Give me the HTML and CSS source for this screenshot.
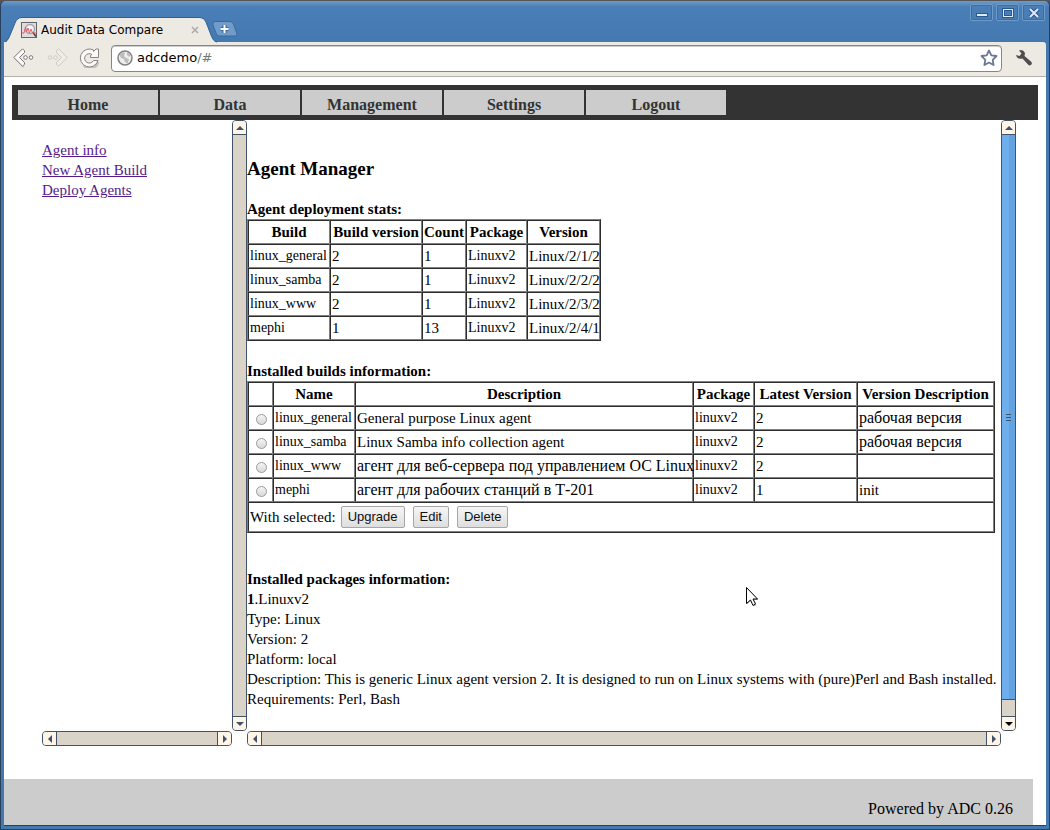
FILE: index.html
```html
<!DOCTYPE html>
<html lang="en">
<head>
<meta charset="utf-8">
<title>Audit Data Compare</title>
<link rel="stylesheet" href="styles.css">
</head>
<body>
<div class="window">
  <header class="titlebar">
    <div class="tab">
      <svg class="tab-shape" width="212" height="26" viewBox="0 0 212 26" aria-hidden="true">
        <path d="M0 26C3 24 4 21 5.500 17L10 6Q12 .5 17 .5H194Q199 .5 201 5L206 18C208 23 209 24 212 26Z" fill="#edeae4"/>
        <path d="M0 25C3 23 4 21 5.500 17L10 6Q12 .5 17 .5H194Q199 .5 201 5L206 18C208 23 209 24 212 25" fill="none" stroke="#2f5f94"/>
      </svg>
      <svg class="favicon" width="16" height="16" viewBox="0 0 16 16" aria-hidden="true">
        <rect x=".5" y=".5" width="15" height="15" fill="#dcdde2" stroke="#666"/>
        <circle cx="9" cy="7" r="4.500" fill="#f4f4f6" stroke="#a4a6ae" stroke-width="1.500"/>
        <path d="M12 10.500L15 14.500" stroke="#444" stroke-width="1.500"/>
        <path d="M1 11H3L4.500 5L5.500 10L7 6L8.500 11L10 7L11.500 11H15" fill="none" stroke="#e86060"/>
      </svg>
      <span class="tab-title">Audit Data Compare</span>
      <button class="tab-close" aria-label="Close tab"><svg width="8" height="8" viewBox="0 0 8 8"><path d="M1 1L7 7M7 1L1 7" stroke="#aaa" stroke-width="1.500"/></svg></button>
    </div>
    <button class="new-tab" aria-label="New tab"><svg width="26" height="16" viewBox="0 0 26 16"><path d="M3 .5H18Q20.500 .5 21.500 3L25 13Q25.500 15 23 15H7Q5 15 4 12L1 4Q0 .5 3 .5Z" fill="#719bc8" stroke="#386ba3"/><path d="M12.500 4V12M8.500 8H16.500" stroke="#39699f" stroke-width="4"/><path d="M12.500 4V12M8.500 8H16.500" stroke="#fff" stroke-width="2"/></svg></button>
    <div class="window-buttons">
      <button aria-label="Minimize"><svg width="22" height="16" viewBox="0 0 22 16"><path d="M5 10H17" stroke="#2b588d" stroke-width="4"/><path d="M6 10H16" stroke="#dfeaf5" stroke-width="2"/></svg></button>
      <button aria-label="Maximize"><svg width="22" height="16" viewBox="0 0 22 16"><rect x="6.500" y="4.500" width="9" height="7" fill="none" stroke="#2b588d" stroke-width="3"/><path d="M6 4.500H16M6.500 4V12M15.500 4V12M6 11.500H16" stroke="#dfeaf5"/></svg></button>
      <button aria-label="Close"><svg width="22" height="16" viewBox="0 0 22 16"><path d="M7 4L15 12M15 4L7 12" stroke="#2b588d" stroke-width="4"/><path d="M7 4L15 12M15 4L7 12" stroke="#dfeaf5" stroke-width="2"/></svg></button>
    </div>
  </header>

  <div class="toolbar">
    <button class="tool" aria-label="Back"><svg width="22" height="20" viewBox="0 0 22 20"><path d="M3 11L11 19" stroke="#cac6bf" stroke-width="2"/><path d="M9.500 .8L.8 9.500L9.500 18.200L11.500 16.200V14.500L6.500 9.500L11.500 4.500V2.800Z" fill="#fbfaf8" stroke="#777" stroke-linejoin="round"/><circle cx="12.500" cy="9.500" r="1.800" fill="#fff" stroke="#777"/><circle cx="18" cy="9.500" r="1.800" fill="#fff" stroke="#777"/></svg></button>
    <button class="tool" aria-label="Forward"><svg width="22" height="20" viewBox="0 0 22 20"><path d="M12.500 .8L21.200 9.500L12.500 18.200L10.500 16.200V14.500L15.500 9.500L10.500 4.500V2.800Z" fill="#f0ede8" stroke="#ccc8c1" stroke-linejoin="round"/><circle cx="9.500" cy="9.500" r="1.800" fill="none" stroke="#d0ccc5"/><circle cx="4" cy="9.500" r="1.800" fill="none" stroke="#d0ccc5"/></svg></button>
    <button class="tool" aria-label="Reload"><svg width="22" height="20" viewBox="0 0 22 20"><path d="M19 14A8 8 0 0 1 5 17" fill="none" stroke="#c5c1ba" stroke-width="3"/><path d="M14.500 3.500L17 1H19.500V9.500H11.500V7.500L13 6.500A4.700 4.700 0 1 0 14.500 12.500H19A9 9 0 1 1 14.500 2Z" fill="#fbfaf8" stroke="#858585" stroke-linejoin="round"/></svg></button>
    <div class="omnibox">
      <svg width="16" height="16" viewBox="0 0 16 16" aria-hidden="true"><circle cx="8" cy="8" r="7" fill="#eee" stroke="#808080" stroke-width="1.500"/><path d="M2.500 5L6 2L8 3L7 6L9 8L12 9L10.500 13.500L8 12L7 9L4 8ZM10 2L13.500 5L12 7L10 5Z" fill="#bcbcbc"/></svg>
      <div class="url" role="textbox" aria-label="Address">adcdemo<span>/#</span></div>
      <button class="star" aria-label="Bookmark"><svg width="18" height="18" viewBox="0 0 18 18"><path d="M9 1.500L11.300 6.300L16.500 7L12.700 10.800L13.600 16L9 13.500L4.400 16L5.300 10.800L1.500 7L6.700 6.300Z" fill="#fff" stroke="#6b7893" stroke-width="1.800" stroke-linejoin="round"/></svg></button>
    </div>
    <button class="tool wrench" aria-label="Settings menu"><svg width="18" height="18" viewBox="0 0 18 18"><path d="M4 1.500Q8 0 10 4L9.500 7L16.500 13Q17.500 15 16 16Q14.500 17 13 15.500L7.500 9.500Q2.500 11 1 6L4.500 7L6.500 4.500Z" fill="#4e4e4e"/></svg></button>
  </div>

  <div class="page">
    <nav class="menu">
      <a href="#">Home</a><a href="#">Data</a><a href="#">Management</a><a href="#">Settings</a><a href="#">Logout</a>
    </nav>
    <div class="frames">
      <aside class="frame side">
        <div class="links">
          <a href="#">Agent info</a>
          <a href="#">New Agent Build</a>
          <a href="#">Deploy Agents</a>
        </div>
        <div class="bar vertical">
          <span class="arrow"><i class="up"></i></span><span class="track"></span><span class="arrow"><i class="down"></i></span>
        </div>
        <div class="bar horizontal">
          <span class="arrow"><i class="left"></i></span><span class="track"></span><span class="arrow"><i class="right"></i></span>
        </div>
      </aside>
      <main class="frame content">
        <div class="document">
          <h1>Agent Manager</h1>
          <h2>Agent deployment stats:</h2>
          <table class="stats">
            <colgroup><col class="w82"><col class="w92"><col class="w44"><col class="w61"><col class="w73"></colgroup>
            <tr><th>Build</th><th>Build version</th><th>Count</th><th>Package</th><th>Version</th></tr>
            <tr><td class="id">linux_general</td><td>2</td><td>1</td><td class="id">Linuxv2</td><td>Linux/2/1/2</td></tr>
            <tr><td class="id">linux_samba</td><td>2</td><td>1</td><td class="id">Linuxv2</td><td>Linux/2/2/2</td></tr>
            <tr><td class="id">linux_www</td><td>2</td><td>1</td><td class="id">Linuxv2</td><td>Linux/2/3/2</td></tr>
            <tr><td class="id">mephi</td><td>1</td><td>13</td><td class="id">Linuxv2</td><td>Linux/2/4/1</td></tr>
          </table>
          <h2 class="spaced">Installed builds information:</h2>
          <table class="builds">
            <colgroup><col class="w25"><col class="w82"><col class="w338"><col class="w61"><col class="w103"><col class="w137"></colgroup>
            <tr><th></th><th>Name</th><th>Description</th><th>Package</th><th>Latest Version</th><th>Version Description</th></tr>
            <tr><td class="pick"><input type="radio" name="build" id="b1"></td><td class="id"><label for="b1">linux_general</label></td><td>General purpose Linux agent</td><td class="id">linuxv2</td><td>2</td><td class="ru" lang="ru">рабочая версия</td></tr>
            <tr><td class="pick"><input type="radio" name="build" id="b2"></td><td class="id"><label for="b2">linux_samba</label></td><td>Linux Samba info collection agent</td><td class="id">linuxv2</td><td>2</td><td class="ru" lang="ru">рабочая версия</td></tr>
            <tr><td class="pick"><input type="radio" name="build" id="b3"></td><td class="id"><label for="b3">linux_www</label></td><td class="ru" lang="ru">агент для веб-сервера под управлением ОС Linux</td><td class="id">linuxv2</td><td>2</td><td></td></tr>
            <tr><td class="pick"><input type="radio" name="build" id="b4"></td><td class="id"><label for="b4">mephi</label></td><td class="ru" lang="ru">агент для рабочих станций в Т-201</td><td class="id">linuxv2</td><td>1</td><td>init</td></tr>
            <tr><td colspan="6"><div class="actions"><span>With selected:</span><button>Upgrade</button><button>Edit</button><button>Delete</button></div></td></tr>
          </table>
          <section class="packages">
            <h2>Installed packages information:</h2>
            <div><b>1</b>.Linuxv2</div>
            <div>Type: Linux</div>
            <div>Version: 2</div>
            <div>Platform: local</div>
            <div>Description: This is generic Linux agent version 2. It is designed to run on Linux systems with (pure)Perl and Bash installed.</div>
            <div>Requirements: Perl, Bash</div>
          </section>
        </div>
        <div class="bar vertical">
          <span class="arrow"><i class="up"></i></span><span class="thumb"><i></i></span><span class="track short"></span><span class="arrow"><i class="down active"></i></span>
        </div>
        <div class="bar horizontal">
          <span class="arrow"><i class="left"></i></span><span class="track"></span><span class="arrow"><i class="right"></i></span>
        </div>
      </main>
    </div>
    <footer class="footer">Powered by ADC 0.26</footer>
  </div>
  <svg class="pointer" width="14" height="21" viewBox="0 0 14 21" aria-hidden="true"><path d="M2 2V18.500L6 15L9 20.500L11.500 19L9 14H13.500Z" fill="#bbb"/><path d="M1.500 1.500V17.500L5.500 14L8 19.500L10.500 18L8 13H12.500Z" fill="#fff" stroke="#000"/></svg>
</div>
</body>
</html>
```

FILE: styles.css
```css
* { box-sizing: border-box; }
html { background: #555; }
body {
  margin: 0;
  font: 15px/20px "Liberation Serif", serif;
  color: #000;
}
button { border: 0; padding: 0; background: none; }
svg { display: block; }

.window {
  position: relative;
  display: flex;
  flex-direction: column;
  min-height: 100vh;
  padding: 0 3px;
  background: #4479b0;
  border: 1px solid #29405c;
  border-top-color: #555;
  border-radius: 6px 6px 0 0;
}

/* Title bar and tabs */
.titlebar {
  display: flex;
  align-items: flex-end;
  height: 41px;
  margin: 0 -3px;
  padding-left: 4px;
  background: linear-gradient(#6d9bcb 0, #4a7eb7 6px, #4479b0);
  border-radius: 5px 5px 0 0;
}
.tab {
  position: relative;
  display: flex;
  align-items: center;
  width: 212px;
  height: 25px;
  padding: 0 18px 0 16px;
  font: 12px/16px "DejaVu Sans", sans-serif;
}
.tab-shape { position: absolute; left: 0; top: 0; }
.favicon, .tab-title, .tab-close { position: relative; }
.tab-title { flex: 1; margin-left: 4px; white-space: nowrap; }
.new-tab { margin: 0 0 5px -5px; }
.window-buttons {
  display: flex;
  gap: 3px;
  align-self: flex-start;
  margin: 3px 4px 0 auto;
}
.window-buttons button {
  border: 1px solid #6f9bc8;
  border-radius: 2px;
  width: 23px;
  height: 17px;
  box-shadow: inset 0 0 0 1px #3b6da5;
  overflow: hidden;
}

/* Toolbar */
.toolbar {
  display: flex;
  align-items: center;
  height: 35px;
  padding: 0 4px 2px 9px;
  background: #edeae4;
  border-bottom: 1px solid #b5b0a8;
  border-radius: 0 3px 0 0;
}
.tool { margin-right: 11px; }
.omnibox {
  display: flex;
  flex: 1;
  align-items: center;
  height: 27px;
  margin-left: -1px;
  padding: 0 3px 0 5px;
  background: #fff;
  border: 1px solid #8c8579;
  border-radius: 4px;
  box-shadow: inset 0 1px 0 #ccc;
}
.url {
  flex: 1;
  margin-left: 4px;
  font: 13px/20px "DejaVu Sans", sans-serif;
}
.url span { color: #777; }
.wrench { margin: 0 9px 0 13px; }

/* Page */
.page {
  display: flex;
  flex: 1;
  flex-direction: column;
  padding-top: 8px;
  background: #fff;
}
.window::after {
  height: 3px;
  border-top: 1px solid #29405c;
  content: "";
}
.menu {
  display: flex;
  gap: 2px;
  margin: 0 8px;
  padding: 5px 6px;
  background: #333;
}
.menu a {
  width: 140px;
  padding-top: 5px;
  background: #ccc;
  color: #333;
  font-size: 16px;
  font-weight: bold;
  text-align: center;
  text-decoration: none;
}
.frames {
  display: flex;
  margin: 0 30px 33px 38px;
}
.frame {
  display: grid;
  grid-template-columns: 1fr 15px;
  grid-template-rows: 1fr 15px;
}
.side { width: 205px; }
.content { flex: 1; min-width: 0; }
.links {
  display: flex;
  flex-direction: column;
  align-items: flex-start;
  padding-top: 20px;
}
.links a { color: #551a8b; }
.document { min-width: 0; padding: 39px 0 22px; }

/* Scroll bars */
.bar {
  display: flex;
  background: #dad3c7;
  border: 1px solid #405369;
  border-radius: 4px;
  overflow: hidden;
}
.vertical { flex-direction: column; }
.track { flex: 1; }
.track.short { flex: 0 0 16px; }
.arrow {
  display: flex;
  flex: 0 0 14px;
  align-items: center;
  justify-content: center;
  background: #fff5e6;
}
.vertical .arrow:first-child { border-bottom: 1px solid #405369; }
.vertical .arrow:last-child { border-top: 1px solid #405369; }
.horizontal .arrow:first-child { border-right: 1px solid #405369; }
.horizontal .arrow:last-child { border-left: 1px solid #405369; }
.arrow i { border: 4px solid transparent; }
.arrow .up { border-top: 0; border-bottom-color: #405369; }
.arrow .down { border-bottom: 0; border-top-color: #405369; }
.arrow .left { border-left: 0; border-right-color: #405369; }
.arrow .right { border-right: 0; border-left-color: #405369; }
.arrow .active { border-top-color: #000; }
.thumb {
  display: flex;
  flex: 1;
  align-items: center;
  justify-content: center;
  background: linear-gradient(90deg, #6eaeec 55%, #65a3e0 55%);
  border-bottom: 1px solid #405369;
}
.thumb i {
  width: 5px;
  height: 7px;
  border: solid #405369;
  border-width: 1px 0;
  background: linear-gradient(transparent 2px, #405369 2px, #405369 3px, transparent 3px);
}

/* Document */
h1, h2 { margin: 0; font-size: 15px; line-height: 20px; }
h1 { margin-bottom: 20px; font-size: 19px; }
.spaced { margin-top: 20px; }
table {
  table-layout: fixed;
  border-spacing: 0;
  border: 1px solid;
  border-color: #808080 #2c2c2c #2c2c2c #808080;
}
.stats { width: 354px; }
.builds { width: 748px; }
.w25 { width: 25px; }
.w44 { width: 44px; }
.w61 { width: 61px; }
.w73 { width: 73px; }
.w82 { width: 82px; }
.w92 { width: 92px; }
.w103 { width: 103px; }
.w137 { width: 137px; }
.w338 { width: 338px; }
th, td {
  height: 24px;
  padding: 1px;
  border: 1px solid;
  border-color: #2c2c2c #808080 #808080 #2c2c2c;
  line-height: 18px;
  white-space: nowrap;
}
th { font-size: 15px; }
.id { font-size: 14px; }
.ru { font-size: 16px; }
.pick { padding-left: 7px; }
.pick input {
  appearance: none;
  display: block;
  width: 11px;
  height: 11px;
  margin: 3px 0 0;
  border: 1px solid #999;
  border-radius: 50%;
  background: linear-gradient(#f4f4f4, #d8d8d8);
}
.actions {
  display: flex;
  align-items: center;
  gap: 8px;
  height: 26px;
}
.actions span { margin-right: -3px; }
.actions button {
  height: 22px;
  padding: 0 6px;
  border: 1px solid #a6a6a6;
  border-radius: 2px;
  background: linear-gradient(#f6f6f6, #dedede);
  color: #111;
  font: 13px/20px "Liberation Sans", sans-serif;
}
.packages { padding-top: 36px; }
.footer {
  flex: 1;
  margin-right: 13px;
  padding: 20px 20px 0;
  background: #ccc;
  font-size: 16px;
  text-align: right;
}
.pointer { position: absolute; left: 744px; top: 585px; }
```
